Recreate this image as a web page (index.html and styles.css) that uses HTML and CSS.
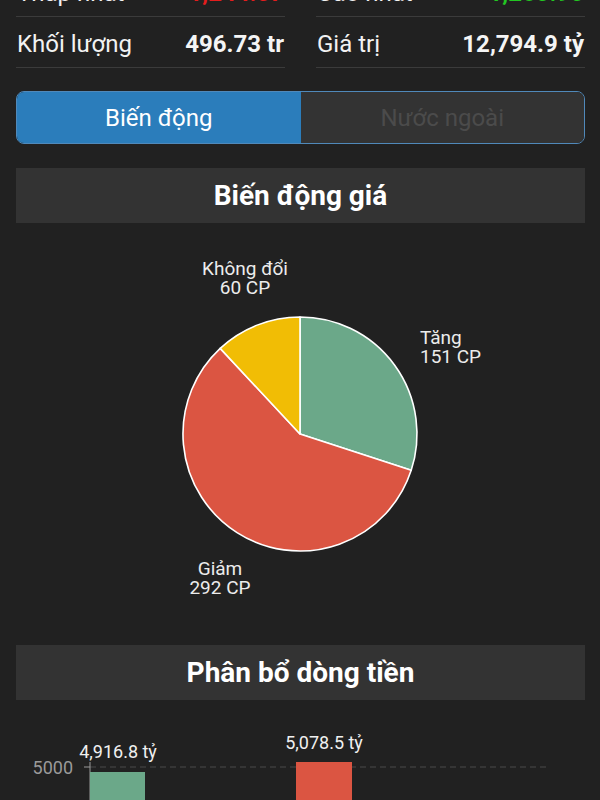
FILE: index.html
```html
<!DOCTYPE html>
<html lang="vi">
<head>
<meta charset="utf-8">
<title>Thị trường</title>
<link rel="stylesheet" href="styles.css">
</head>
<body>
<div class="page">
  <div class="stats">
    <div class="stat"><span class="label">Thấp nhất</span><span class="value down">1,244.07</span></div>
    <div class="stat"><span class="label">Cao nhất</span><span class="value up">1,260.90</span></div>
    <div class="stat"><span class="label">Khối lượng</span><span class="value">496.73 tr</span></div>
    <div class="stat"><span class="label">Giá trị</span><span class="value">12,794.9 tỷ</span></div>
  </div>

  <div class="tabs">
    <div class="tab active">Biến động</div>
    <div class="tab">Nước ngoài</div>
  </div>

  <div class="section-title">Biến động giá</div>

  <svg class="pie" width="569" height="398" viewBox="0 0 569 398">
    <g stroke="#ffffff" stroke-width="1.6" stroke-linejoin="round">
      <path class="s-up" d="M284 211 L284 94 A117 117 0 0 1 395.2 247.3 Z"/>
      <path class="s-down" d="M284 211 L395.2 247.3 A117 117 0 1 1 204.2 125.4 Z"/>
      <path class="s-flat" d="M284 211 L204.2 125.4 A117 117 0 0 1 284 94 Z"/>
    </g>
    <g class="pie-label">
      <text x="229" y="52" text-anchor="middle">Không đổi</text>
      <text x="229" y="71" text-anchor="middle">60 CP</text>
      <text x="404" y="121">Tăng</text>
      <text x="404" y="140">151 CP</text>
      <text x="204" y="352" text-anchor="middle">Giảm</text>
      <text x="204" y="371" text-anchor="middle">292 CP</text>
    </g>
  </svg>

  <div class="section-title">Phân bổ dòng tiền</div>

  <svg class="bars" width="569" height="100" viewBox="0 0 569 100">
    <text class="axis-label" x="57" y="74" text-anchor="end">5000</text>
    <line x1="74" y1="67" x2="533" y2="67" stroke="#4a4a4a" stroke-width="1" stroke-dasharray="6 4"/>
    <line x1="68" y1="67" x2="74" y2="67" stroke="#9a9a9a" stroke-width="1"/>
    <line x1="74" y1="62" x2="74" y2="100" stroke="#9a9a9a" stroke-width="1"/>
    <rect class="s-up" x="74" y="72" width="55" height="40"/>
    <rect class="s-down" x="280" y="62" width="56" height="50"/>
    <text class="bar-label" x="102" y="58" text-anchor="middle">4,916.8 tỷ</text>
    <text class="bar-label" x="308" y="49" text-anchor="middle">5,078.5 tỷ</text>
  </svg>
</div>
</body>
</html>
```

FILE: styles.css
```css
* { box-sizing: border-box; }

html, body {
  margin: 0;
  padding: 0;
  background: #212121;
  font-family: Roboto, "Noto Sans", "Liberation Sans", sans-serif;
  color: #f2f2f2;
  overflow: hidden;
}

.page {
  margin-top: -34px;
  padding: 0 15px 0 16px;
}

.stats {
  display: grid;
  grid-template-columns: 1fr 1fr;
  column-gap: 31px;
}

.stat {
  height: 51px;
  display: flex;
  align-items: center;
  justify-content: space-between;
  border-bottom: 1px solid #3b3b3b;
  padding: 3px 1px 0;
  font-size: 24px;
}

.label { font-weight: 400; color: #f2f2f2; }
.value { font-weight: 700; color: #f5f5f5; }
.value.down { color: #e41d1d; }
.value.up { color: #22c722; }

.tabs {
  margin-top: 23px;
  height: 53px;
  display: flex;
  border: 1.5px solid #5089ba;
  border-radius: 8px;
  overflow: hidden;
}

.tab {
  flex: 1;
  display: flex;
  align-items: center;
  justify-content: center;
  font-size: 24px;
  background: #333333;
  color: #4b4b4b;
}

.tab.active {
  background: #2b7dbb;
  color: #ffffff;
}

.section-title {
  margin-top: 24px;
  height: 55px;
  display: flex;
  align-items: center;
  justify-content: center;
  background: #333333;
  font-size: 28px;
  font-weight: 700;
  color: #ffffff;
}

.pie, .bars { display: block; }

.s-up { fill: #6ba889; }
.s-down { fill: #db5542; }
.s-flat { fill: #f1bd05; }

.pie-label text {
  font-size: 19px;
  fill: #ececec;
}

.axis-label {
  font-size: 18px;
  fill: #9a9a9a;
}

.bar-label {
  font-size: 18px;
  fill: #f0f0f0;
}
```
